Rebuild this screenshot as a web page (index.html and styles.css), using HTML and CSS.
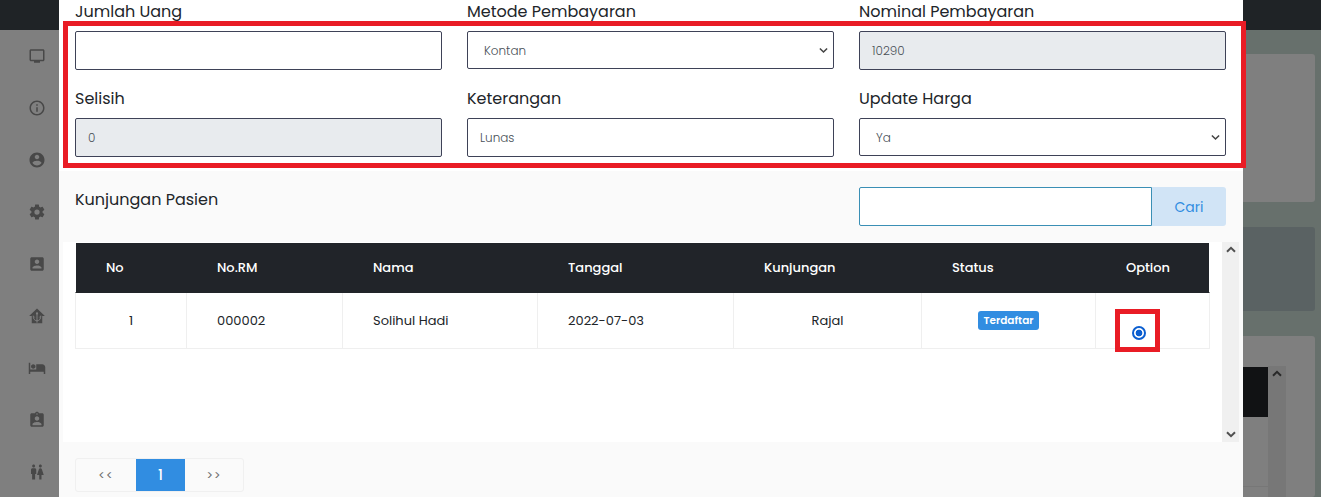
FILE: index.html
```html
<!DOCTYPE html>
<html lang="id">
<head>
<meta charset="utf-8">
<title>Kunjungan Pasien</title>
<link rel="stylesheet" href="styles.css">
</head>
<body>
<div class="app">
  <aside class="side">
    <div class="side-top"></div>
    <nav class="side-nav">
      <svg viewBox="0 0 24 24"><path d="M20 3H4c-1.100 0-2 .9-2 2v12c0 1.100.9 2 2 2h4v2h8v-2h4c1.100 0 2-.9 2-2V5c0-1.100-.9-2-2-2zm0 14H4V5h16v12z"/></svg>
      <svg viewBox="0 0 24 24"><path d="M11 7h2v2h-2zm0 4h2v6h-2zm1-9C6.480 2 2 6.480 2 12s4.480 10 10 10 10-4.480 10-10S17.520 2 12 2zm0 18c-4.410 0-8-3.590-8-8s3.590-8 8-8 8 3.590 8 8-3.590 8-8 8z"/></svg>
      <svg viewBox="0 0 24 24"><path d="M12 2C6.480 2 2 6.480 2 12s4.480 10 10 10 10-4.480 10-10S17.520 2 12 2zm0 3c1.660 0 3 1.340 3 3s-1.340 3-3 3-3-1.340-3-3 1.340-3 3-3zm0 14.200c-2.500 0-4.710-1.280-6-3.220.030-1.990 4-3.080 6-3.080s5.970 1.090 6 3.080c-1.290 1.940-3.500 3.220-6 3.220z"/></svg>
      <svg viewBox="0 0 24 24"><path d="M12 15.500A3.500 3.500 0 0 1 8.500 12 3.500 3.500 0 0 1 12 8.500a3.500 3.500 0 0 1 3.500 3.500 3.500 3.500 0 0 1-3.500 3.500m7.430-2.530c.04-.32.07-.64.07-.97s-.03-.66-.07-1l2.110-1.630c.19-.15.24-.42.12-.64l-2-3.460c-.12-.22-.39-.31-.61-.22l-2.490 1c-.52-.39-1.060-.73-1.690-.98l-.37-2.650A.506.506 0 0 0 14 2h-4c-.25 0-.46.18-.5.420l-.37 2.650c-.63.25-1.170.59-1.690.98l-2.490-1c-.22-.09-.49 0-.61.22l-2 3.460c-.13.22-.07.49.12.64L4.570 11c-.04.34-.07.67-.07 1s.03.65.07.97l-2.110 1.660c-.19.15-.25.42-.12.64l2 3.460c.12.22.39.3.61.22l2.490-1.010c.52.4 1.060.74 1.690.99l.37 2.650c.04.24.25.42.5.42h4c.25 0 .46-.18.5-.42l.37-2.650c.63-.26 1.170-.59 1.690-.99l2.490 1.010c.22.08.49 0 .61-.22l2-3.460c.12-.22.07-.49-.12-.64z"/></svg>
      <svg viewBox="0 0 24 24"><path d="M3 5v14c0 1.100.89 2 2 2h14c1.100 0 2-.9 2-2V5c0-1.100-.9-2-2-2H5c-1.110 0-2 .9-2 2zm12 4c0 1.660-1.340 3-3 3s-3-1.340-3-3 1.340-3 3-3 3 1.340 3 3zm-9 8c0-2 4-3.100 6-3.100s6 1.100 6 3.100v1H6v-1z"/></svg>
      <svg viewBox="0 0 24 24"><path d="M12 2 1.500 12H5v9.500h14V12h3.500z"/><g class="cut"><circle cx="12" cy="8.500" r="1.500"/><path d="M12 9v12M12 18.500C8.500 18 7 16 7 11.500M12 18.500C15.500 18 17 16 17 11.500M8.500 13.500h1M14.500 13.500h1"/></g></svg>
      <svg viewBox="0 0 24 24"><path d="M7 13c1.660 0 3-1.340 3-3S8.660 7 7 7s-3 1.340-3 3 1.340 3 3 3zm12-6h-8v7H3V5H1v15h2v-3h18v3h2v-9c0-2.210-1.790-4-4-4z"/></svg>
      <svg viewBox="0 0 24 24"><path d="M19 3h-4.180C14.400 1.840 13.300 1 12 1s-2.400.84-2.820 2H5c-1.100 0-2 .9-2 2v14c0 1.100.9 2 2 2h14c1.100 0 2-.9 2-2V5c0-1.100-.9-2-2-2zm-7 0c.55 0 1 .45 1 1s-.45 1-1 1-1-.45-1-1 .45-1 1-1zm0 4c1.660 0 3 1.340 3 3s-1.340 3-3 3-3-1.340-3-3 1.340-3 3-3zm6 12H6v-1.400c0-2 4-3.100 6-3.100s6 1.100 6 3.100V19z"/></svg>
      <svg viewBox="0 0 24 24"><path d="M5.500 22v-7.500H4V9c0-1.100.9-2 2-2h3c1.100 0 2 .9 2 2v5.500H9.500V22h-4zM18 22v-6h3l-2.540-7.630A2.010 2.010 0 0 0 16.560 7h-.12a2 2 0 0 0-1.900 1.370L12 16h3v6h3zM7.500 6c1.110 0 2-.89 2-2s-.89-2-2-2-2 .89-2 2 .89 2 2 2zm9 0c1.110 0 2-.89 2-2s-.89-2-2-2-2 .89-2 2 .89 2 2 2z"/></svg>
    </nav>
  </aside>

  <main class="modal">
    <section class="form">
      <div class="field"><label>Jumlah Uang</label><div class="box"></div></div>
      <div class="field"><label>Metode Pembayaran</label><div class="box select"><span>Kontan</span><svg class="chev" viewBox="0 0 10 7"><path d="M1 1.200 5 5.200 9 1.200"/></svg></div></div>
      <div class="field"><label>Nominal Pembayaran</label><div class="box off"><span>10290</span></div></div>
      <div class="field"><label>Selisih</label><div class="box off"><span>0</span></div></div>
      <div class="field"><label>Keterangan</label><div class="box"><span>Lunas</span></div></div>
      <div class="field"><label>Update Harga</label><div class="box select"><span>Ya</span><svg class="chev" viewBox="0 0 10 7"><path d="M1 1.200 5 5.200 9 1.200"/></svg></div></div>
      <div class="mark mark-form"></div>
    </section>

    <section class="visits-head">
      <h2>Kunjungan Pasien</h2>
      <div class="search"><div class="search-input"></div><div class="search-btn">Cari</div></div>
    </section>

    <section class="scroll">
      <div class="table">
        <div class="tr th">
          <div>No</div><div>No.RM</div><div>Nama</div><div>Tanggal</div><div>Kunjungan</div><div>Status</div><div>Option</div>
        </div>
        <div class="tr td">
          <div class="mid">1</div><div>000002</div><div>Solihul Hadi</div><div>2022-07-03</div><div class="mid">Rajal</div><div class="mid"><span class="badge">Terdaftar</span></div>
          <div class="opt"><span class="radio"></span><div class="mark mark-radio"></div></div>
        </div>
      </div>
      <div class="bar">
        <svg class="arrow" viewBox="0 0 10 7"><path d="M1 5.800 5 1.800 9 5.800"/></svg>
        <svg class="arrow" viewBox="0 0 10 7"><path d="M1 1.200 5 5.200 9 1.200"/></svg>
      </div>
    </section>

    <div class="pager"><span class="prev">&lt;&lt;</span><span class="cur">1</span><span class="next">&gt;&gt;</span></div>
  </main>

  <div class="behind">
    <div class="behind-top"></div>
    <div class="card card-a"></div>
    <div class="card card-b"></div>
    <div class="card card-c">
      <div class="b-table"><div class="b-head"></div><div class="b-row"></div></div>
      <div class="b-bar"><svg class="arrow" viewBox="0 0 10 7"><path d="M1 5.800 5 1.800 9 5.800"/></svg></div>
    </div>
  </div>
</div>
</body>
</html>
```
FILE: styles.css
```css
* { box-sizing: border-box; }
body {
  margin: 0;
  overflow: hidden;
  font-family: Poppins, Inter, sans-serif;
  color: #212529;
}
.app { display: flex; width: 1321px; height: 497px; overflow: hidden; }

/* dimmed sidebar */
.side { width: 59px; background: #7f7f7f; }
.side-top { height: 30px; background: #1f2326; }
.side-nav { display: flex; flex-direction: column; align-items: center; gap: 34px; padding: 17px 0 0 15px; }
.side-nav svg { width: 18px; height: 18px; fill: #484848; flex: none; }
.side-nav .cut circle { fill: #7f7f7f; }
.side-nav .cut path { fill: none; stroke: #7f7f7f; stroke-width: 1.300; }

.modal { width: 1184px; background: #fafafa; }

/* payment form */
.form {
  position: relative;
  display: grid;
  grid-template-columns: repeat(3, 367px);
  column-gap: 25px;
  grid-auto-rows: 87px;
  height: 171px;
  padding-left: 16px;
  background: #fff;
}
.field label { display: block; height: 31px; font-size: 16px; line-height: 23px; white-space: nowrap; }
.box {
  display: flex;
  align-items: center;
  height: 39px;
  padding: 0 12px;
  border: 1px solid #3e4257;
  border-radius: 2px;
  background: #fff;
  color: #495057;
  font-size: 12px;
  font-weight: 300;
}
.box.select { height: 38px; padding: 1px 5px 0 16px; justify-content: space-between; }
.off { background: #e8ebee; }
.chev { width: 9px; height: 7px; fill: none; stroke: #444; stroke-width: 1.700; }

/* red annotation outlines */
.mark { position: absolute; border: 5px solid #e91c25; }
.mark-form { left: 4px; top: 21px; width: 1183px; height: 147px; z-index: 1; }
.mark-radio { left: 19px; top: 16px; width: 45px; height: 43px; }

.visits-head { display: flex; justify-content: space-between; height: 71px; padding: 16px 17px 0 16px; }
.visits-head h2 { margin: 0; font-size: 16px; font-weight: 400; line-height: 25px; }
.search { display: flex; width: 367px; height: 39px; }
.search-input { width: 293px; border: 1px solid #3a8fb5; border-radius: 2px 0 0 2px; background: #fff; }
.search-btn { flex: 1; border-radius: 0 3px 3px 0; background: #d1e4f6; color: #318de1; font-size: 14px; line-height: 41px; text-align: center; }

/* visits table */
.scroll { display: flex; justify-content: space-between; height: 200px; margin: 0 4px; padding: 0 0 0 12px; background: #fff; }
.table { width: 1135px; padding-top: 1px; }
.tr { display: grid; grid-template-columns: 111px 156px 195px 196px 188px 174px 115px; font-size: 13px; }
.th { height: 49px; margin-left: 1px; width: 1133px; background: #212429; color: #fff; font-weight: 500; line-height: 49px; }
.th > div { padding-left: 30px; }
.td { height: 57px; border: solid #efefef; border-width: 1px; border-top-color: #212429; line-height: 55px; }
.td > div { padding-left: 30px; border-right: 1px solid #efefef; white-space: nowrap; }
.td > div.mid { display: flex; align-items: center; justify-content: center; padding: 0; }
.td > div.opt { position: relative; padding: 33px 0 0 36px; border: 0; }
.badge { height: 19px; width: 61px; text-align: center; border-radius: 3px; background: #318de1; color: #fff; font-size: 10.500px; font-weight: 600; line-height: 19px; }
.radio { display: block; width: 14px; height: 14px; border: 2px solid #0b5ed0; border-radius: 50%; background: radial-gradient(circle, #0b5ed0 0 3px, #fff 3.700px); }
.bar { display: flex; flex-direction: column; justify-content: space-between; align-items: center; width: 17px; padding: 4px 0; background: #f0f0f0; }
.arrow { width: 10px; height: 7px; fill: none; stroke: #505050; stroke-width: 2; }

.pager { display: flex; width: 169px; height: 34px; margin: 16px 0 0 16px; border: 1px solid #f0f0f0; border-radius: 3px; font-size: 12px; line-height: 33px; text-align: center; color: #6c6c6c; }
.prev { width: 60px; letter-spacing: 1px; }
.cur { width: 49px; background: #318de1; color: #fff; font-size: 14px; line-height: 32px; font-weight: 500; }
.next { width: 58px; letter-spacing: 1px; }

/* dimmed page to the right of the dialog */
.behind { width: 78px; background: #67706c; }
.behind-top { height: 30px; background: #1f2326; }
.card { width: 72px; border-radius: 0 3px 3px 0; background: #7f7f7f; }
.card-a { height: 148px; margin-top: 24px; }
.card-b { height: 84px; margin-top: 25px; background: #5a6263; }
.card-c { display: flex; height: 161px; margin-top: 25px; padding-top: 30px; }
.b-table { width: 25px; padding-top: 1px; }
.b-head { height: 50px; background: #111214; }
.b-row { height: 70px; border-bottom: 1px solid #777; }
.b-bar { width: 18px; padding-top: 4px; background: #777; text-align: center; line-height: 0; }
.b-bar .arrow { stroke: #292929; }
```
